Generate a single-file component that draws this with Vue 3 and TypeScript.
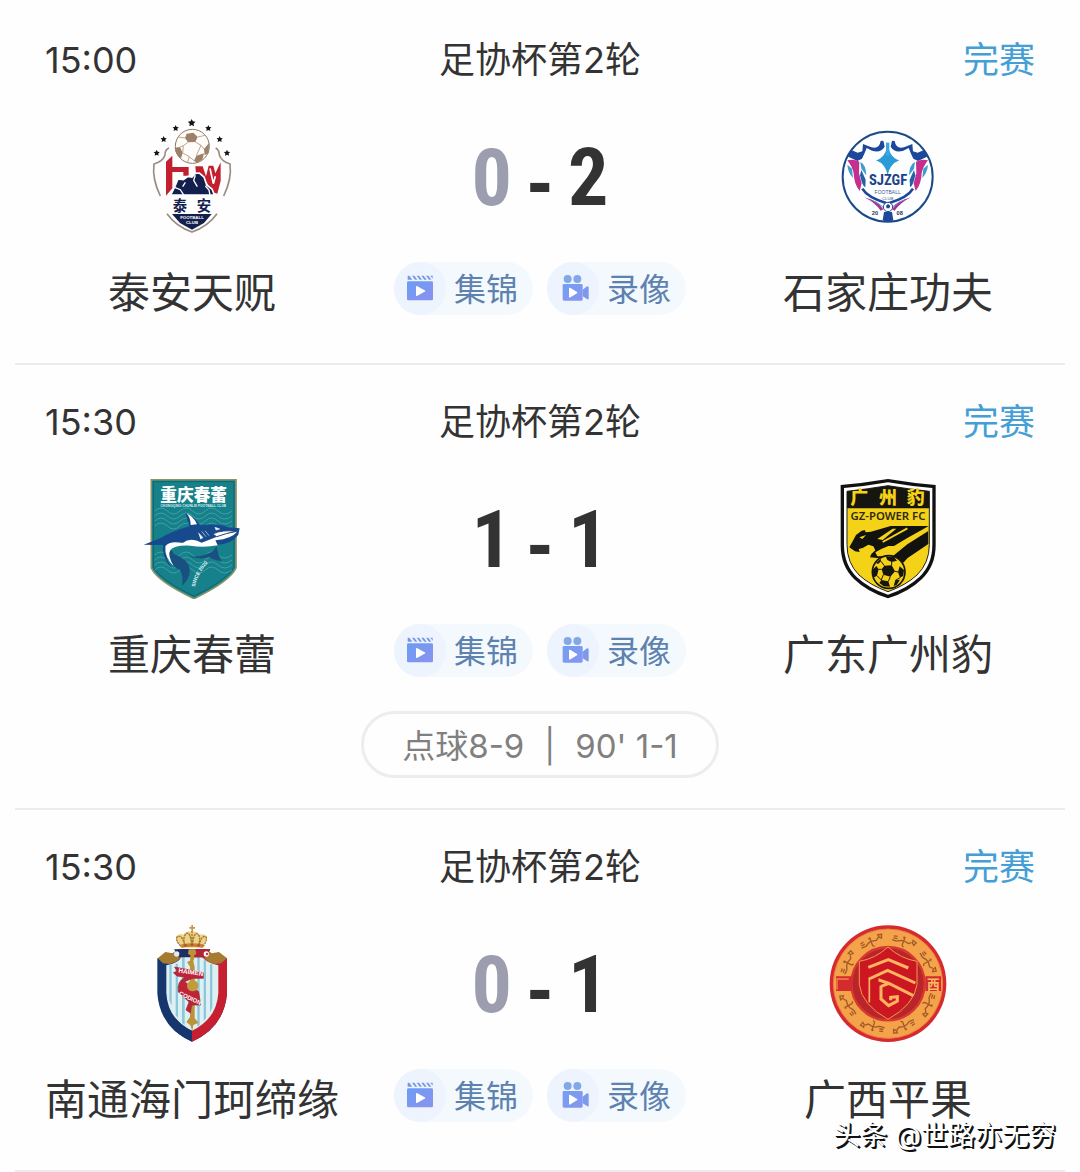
<script setup lang="ts">
interface Side {
  name: string
  crest: string
  score: number
}

interface Match {
  id: number
  time: string
  round: string
  status: string
  home: Side
  away: Side
  note?: string[]
}

const matches: Match[] = [
  {
    id: 1,
    time: '15:00',
    round: '足协杯第2轮',
    status: '完赛',
    home: { name: '泰安天贶', crest: 'taian', score: 0 },
    away: { name: '石家庄功夫', crest: 'sjz', score: 2 },
  },
  {
    id: 2,
    time: '15:30',
    round: '足协杯第2轮',
    status: '完赛',
    home: { name: '重庆春蕾', crest: 'chongqing', score: 1 },
    away: { name: '广东广州豹', crest: 'gzpower', score: 1 },
    note: ['点球8-9', '|', "90' 1-1"],
  },
  {
    id: 3,
    time: '15:30',
    round: '足协杯第2轮',
    status: '完赛',
    home: { name: '南通海门珂缔缘', crest: 'haimen', score: 0 },
    away: { name: '广西平果', crest: 'guangxi', score: 1 },
  },
]

const sides = (m: Match) => [
  { key: 'home', side: m.home },
  { key: 'away', side: m.away },
]

const starCentres = [
  [80, 144, 10],
  [101, 103, 10],
  [137, 70, 10],
  [185, 54, 12],
  [235, 70, 10],
  [269, 103, 10],
  [291, 144, 10],
]

// Outline of a five-pointed star around a centre
function star(cx: number, cy: number, r: number): string {
  return Array.from({ length: 10 }, (_, i) => {
    const radius = i % 2 ? r * 0.5 : r
    const a = (Math.PI / 5) * i - Math.PI / 2
    return `${(cx + radius * Math.cos(a)).toFixed(1)},${(cy + radius * Math.sin(a)).toFixed(1)}`
  }).join(' ')
}

// Small figures spread round the ring of the Guangxi crest
const figureAngles = [-62, -21, 21, 62, 118, 160, 200, 242]
</script>

<template>
  <main class="page">
    <section v-for="m in matches" :key="m.id" class="match">
      <header class="head">
        <time class="time">{{ m.time }}</time>
        <span class="round">{{ m.round }}</span>
        <span class="status">{{ m.status }}</span>
      </header>

      <div class="body">
        <div v-for="s in sides(m)" :key="s.key" class="team" :class="s.key">
          <svg v-if="s.side.crest === 'taian'" class="crest" viewBox="6 36 360 360" aria-hidden="true">
            <polygon v-for="c in starCentres" :key="c[0]" :points="star(c[0], c[1], c[2])" fill="#151515" />
            <g fill="none" stroke="#9a8d82" stroke-width="5">
              <path d="M117 129Q104 135 105 150Q98 170 72 177Q66 222 91 273" />
              <path d="M257 129Q268 135 268 150Q275 170 300 177Q306 222 281 273" />
              <path d="M111 326Q138 364 186 381Q234 364 261 326" />
            </g>
            <path d="M108 170L127 152V186H176V212H160V201H127V250L108 272Z" fill="#c2202f" />
            <path d="M196 184H218L228 214L236 182H250L256 205L272 172V228L262 266L248 262L226 226L210 206H198Z" fill="#c2202f" />
            <path d="M240 190L250 236L256 214" fill="none" stroke="#fff" stroke-width="5" />
            <path d="M122 270L134 246L144 222L160 224L174 214L186 216L196 205L208 204L222 216L230 240L246 252L253 270Z" fill="#13204d" stroke="#fff" stroke-width="5" />
            <path d="M134 247L151 254L162 271M196 211L191 226L202 245M226 243L237 255L240 270M166 232L158 245" fill="none" stroke="#fff" stroke-width="4" />
            <text x="150" y="317" text-anchor="middle" font-size="43" font-weight="700" fill="#13204d" class="cjk">泰</text>
            <text x="222" y="317" text-anchor="middle" font-size="43" font-weight="700" fill="#13204d" class="cjk">安</text>
            <path d="M126 327H245L222 354L186 374L150 354Z" fill="#13204d" />
            <text x="186" y="343" text-anchor="middle" font-size="13" font-weight="700" fill="#fff" class="latin">FOOTBALL</text>
            <text x="186" y="358" text-anchor="middle" font-size="13" font-weight="700" fill="#fff" class="latin">CLUB</text>
            <circle cx="187" cy="124" r="51" fill="#fffdf8" stroke="#8d7a68" stroke-width="3" />
            <path d="M170 86L190 83L203 96L196 111L174 112L165 99ZM237 114L236 144L224 151L222 132ZM134 128L150 126L158 144L153 160Q136 150 134 128ZM199 152L222 145L217 164L200 173L192 167Z" fill="#9c8069" />
            <path d="M174 112L160 122L150 126M196 111L213 121L222 132M158 144L178 155L192 167M203 96L226 91M165 99L145 96M213 121L199 152M178 155L172 173M160 122L158 144" fill="none" stroke="#b9a796" stroke-width="3" />
          </svg>

          <svg v-else-if="s.side.crest === 'sjz'" class="crest" viewBox="24 21 360 360" aria-hidden="true">
            <circle cx="203" cy="200" r="135" fill="#fdfeff" stroke="#1d4a86" stroke-width="6" />
            <g v-for="side in [1, -1]" :key="side" :transform="side === 1 ? undefined : 'translate(406 0) scale(-1 1)'">
              <path d="M182 93L190 92L194 110Q182 130 156 122L140 114L133 131L126 146L112 153L82 139L94 120L113 128L127 124L129 102L152 111Q178 119 182 93Z" fill="#1c479b" />
              <path d="M82 151Q102 146 118 155L117 190L125 220L119 243Q102 223 101 190Q97 170 82 151Z" fill="#c72f8f" />
              <path d="M82 164L96 176L99 204Q84 188 82 164ZM121 156Q138 164 139 196L124 176Z" fill="#3f9dce" />
              <path d="M124 180L137 209L136 232Q127 229 120 196Z" fill="#2460aa" />
              <path d="M127 236Q142 262 198 279L203 288" fill="none" stroke="#1c479b" stroke-width="8" />
              <path d="M133 262Q172 271 190 298L182 302Q164 277 133 262Z" fill="#a53591" />
              <path d="M150 269Q180 279 197 300" fill="none" stroke="#6384c6" stroke-width="3" />
            </g>
            <path d="M203 96Q206 142 238 151Q209 162 203 196Q197 162 168 151Q200 142 203 96Z" fill="#2b9bd7" />
            <path d="M198 98H208V137H198Z" fill="#3aa8dd" />
            <text x="204" y="224" text-anchor="middle" font-size="44" font-weight="700" fill="#1c4387" class="narrow">SJZGF</text>
            <text x="203" y="253" text-anchor="middle" font-size="15" fill="#415d91" class="latin">FOOTBALL</text>
            <text x="203" y="269" text-anchor="middle" font-size="13" fill="#415d91" class="latin">CLUB</text>
            <circle cx="204" cy="291" r="14" fill="#fff" stroke="#1c479b" stroke-width="3" />
            <path d="M198 287L204 282L211 287L208 295H200ZM192 306H216L220 331Q203 338 188 331Z" fill="#1c479b" />
            <text x="165" y="316" text-anchor="middle" font-size="17" font-weight="700" fill="#25365b" class="latin">20</text>
            <text x="239" y="316" text-anchor="middle" font-size="17" font-weight="700" fill="#25365b" class="latin">08</text>
          </svg>

          <svg v-else-if="s.side.crest === 'chongqing'" class="crest" viewBox="6 42 360 360" aria-hidden="true">
            <path d="M64 44H318V309Q300 349 192 401Q82 349 64 309Z" fill="#16808b" stroke="#8b9465" stroke-width="5" />
            <path d="M70 50H312V307Q292 344 192 394Q90 344 70 307Z" fill="none" stroke="#0e6572" stroke-width="3" />
            <g fill="none" stroke="#3fa1a5" stroke-width="3">
              <path v-for="y in [138, 153, 168, 183, 270, 285, 300, 315]" :key="y" :d="`M74 ${y}Q93 ${y - 18} 112 ${y}T150 ${y}T188 ${y}T226 ${y}T264 ${y}T306 ${y}`" />
            </g>
            <text x="191" y="107" text-anchor="middle" font-size="50" font-weight="900" fill="#fff" class="cjk">重庆春蕾</text>
            <text x="190" y="125" text-anchor="middle" font-size="10" font-weight="700" fill="#d5ecec" class="latin">CHONGQING CHUNLEI FOOTBALL CLUB</text>
            <path d="M105 240Q108 300 150 314Q162 335 156 363Q190 329 174 296Q160 278 132 268L119 246Z" fill="#195081" />
            <path d="M171 273Q210 281 250 258L259 244Q263 268 275 290Q248 284 236 276Q210 286 171 273Z" fill="#195081" />
            <path d="M41 239L92 219Q128 198 178 184Q170 155 166 144Q192 154 211 181Q269 174 293 187L329 190L325 209Q307 236 259 240Q202 249 174 231Q119 231 107 249Q103 276 126 309L116 299Q95 268 99 239L78 240Z" fill="#17498d" />
            <path d="M170 145Q193 158 201 178L182 180Q182 160 170 145ZM106 244Q119 226 158 234Q182 215 215 233Q254 219 278 208L321 200Q307 220 256 226L263 241Q222 249 181 242Q131 240 121 256Q111 269 131 304Q103 276 106 244Z" fill="#fff" />
            <path d="M248 207Q277 193 318 199Q291 204 260 215Z" fill="#fff" stroke="#244a7c" stroke-width="3" />
            <path d="M255 187L269 192L258 195ZM205 203L219 218L211 222M215 199L228 215M225 197L237 212" fill="#fff" stroke="#dce7ee" stroke-width="2" />
            <path id="sinceArc" d="M195 366Q203 319 245 284" fill="none" />
            <text font-size="15" font-weight="700" fill="#e6f5f3" class="latin"><textPath href="#sinceArc">SINCE 2020</textPath></text>
          </svg>

          <svg v-else-if="s.side.crest === 'gzpower'" class="crest" viewBox="24 42 360 360" aria-hidden="true">
            <path d="M62 60Q132 54 204 42Q276 54 347 60V241Q347 303 306 342Q266 381 204 400Q142 381 102 342Q62 303 62 241Z" fill="#111" />
            <path d="M72 69Q136 64 204 52Q272 64 337 69V239Q337 298 298 336Q261 371 204 389Q147 371 110 336Q72 298 72 239Z" fill="#fff" />
            <path d="M81 79Q143 72 204 62Q265 72 328 79V239Q328 294 291 330Q257 361 204 380Q151 361 117 330Q81 294 81 239Z" fill="#f4d218" stroke="#222" stroke-width="3" />
            <path d="M81 79Q143 72 204 62Q265 72 328 79V130H81Z" fill="#171510" />
            <text x="118" y="118" text-anchor="middle" font-size="54" font-weight="900" fill="#f4d218" class="cjk">广</text>
            <text x="204" y="118" text-anchor="middle" font-size="54" font-weight="900" fill="#f4d218" class="cjk">州</text>
            <text x="287" y="118" text-anchor="middle" font-size="54" font-weight="900" fill="#f4d218" class="cjk">豹</text>
            <text x="204" y="166" text-anchor="middle" font-size="34" font-weight="600" fill="#302a10" class="sans">GZ-POWER FC</text>
            <path d="M88 247L98 229L108 210L124 198L134 195L137 202L153 200L212 183H325V237L263 279L250 293L222 274L172 279L150 277L154 267L166 256L160 244L145 239L128 249L116 252L119 261L105 259Z" fill="#12120f" />
            <path d="M118 217L138 210L127 222ZM172 222L218 191H229L188 225ZM166 262L184 252L205 243H222L262 219L325 184V198L262 238L218 274H172Z" fill="#f4d218" />
            <path d="M188 231L262 190" fill="none" stroke="#f4d218" stroke-width="6" />
            <circle cx="206" cy="321" r="49" fill="#f4d218" stroke="#171510" stroke-width="5" />
            <path d="M193 302L215 301L225 319L211 335L190 329L185 313ZM197 274L222 276L231 287L215 291L202 285ZM158 314L169 303L176 313L171 332L160 338ZM239 304L252 315L250 332L240 338L234 321ZM184 345L205 349L210 365L191 364L178 354ZM226 346L240 344L230 360L221 363ZM168 294L182 281L183 289L174 297Z" fill="#171510" />
            <path d="M215 301V291M225 319L234 321M211 335L205 349M190 329L184 345M185 313L176 313M193 302L183 289M240 338L226 346M171 332L184 345" stroke="#171510" stroke-width="3" />
          </svg>

          <svg v-else-if="s.side.crest === 'haimen'" class="crest" viewBox="6 27 360 360" aria-hidden="true">
            <path d="M82 130Q127 123 144 102H225Q243 123 291 130V235Q283 337 186 380Q89 337 82 235Z" fill="#17366e" />
            <path d="M186 102H225Q243 123 291 130V235Q283 337 186 380Z" fill="#c71f32" />
            <path d="M109 151Q145 145 154 126H216Q232 145 265 151V234Q260 312 186 347Q113 312 109 234Z" fill="#dff0f4" />
            <g fill="#8bc8da">
              <path d="M118 150H125V272L118 256ZM137 146H144V309L137 301ZM156 126H164V330L156 324ZM202 126H209V330L202 335ZM221 136H228V309L221 318ZM240 148H247V278L240 292Z" />
            </g>
            <path d="M138 311Q157 335 186 347V380Q143 361 119 331Z" fill="#17366e" />
            <path d="M144 102L160 104L158 122L139 140L119 147L99 145L83 130L106 111L128 115ZM229 102L213 104L215 122L234 140L253 147L273 145L291 130L267 111L245 115Z" fill="#a67a31" />
            <path d="M132 103H241L226 127H147Z" fill="#202f60" />
            <path d="M186 103H241L226 127H186Z" fill="#b62235" />
            <circle cx="140" cy="117" r="8" fill="#d9edf6" /><circle cx="229" cy="117" r="8" fill="#fff" /><circle cx="231" cy="117" r="4" fill="#d63b47" />
            <path d="M176 103H196L199 116L187 126L174 116ZM181 124L187 116L194 127L190 139L194 155V310L206 323L190 330L187 348L181 331L169 321L180 306V155L171 141L180 137Z" fill="#bc933a" />
            <path d="M134 156L220 173V190H188L164 200L206 230L212 270L185 270L181 294L168 285L177 261L145 231Q140 200 165 187L141 183L130 173L141 169Z" fill="#bf2338" stroke="#8f2b35" stroke-width="2" />
            <circle cx="188" cy="212" r="17" fill="#c59a3c" />
            <text x="182" y="178" text-anchor="middle" font-size="19" font-weight="700" fill="#fff" class="latin" transform="rotate(8 182 178)">HAIMEN</text>
            <text x="178" y="255" text-anchor="middle" font-size="18" font-weight="700" fill="#fff" class="latin" transform="rotate(26 178 255)">CODION</text>
            <path d="M153 98L137 69Q139 59 153 57L160 59Q168 49 184 49Q201 49 208 59Q226 55 230 66L218 98Z" fill="#ecd28a" />
            <path d="M153 94Q136 78 141 66Q157 57 164 91M164 91Q157 65 170 55Q181 50 185 90M187 90Q192 49 203 57Q214 65 205 91M207 91Q216 56 229 67Q231 81 218 95M186 48V88" fill="none" stroke="#a7782d" stroke-width="4" stroke-dasharray="7 2" />
            <path d="M154 88Q186 82 219 88V98Q186 93 154 98Z" fill="#bd8530" />
            <path d="M184 30H189V36H195V41H189V48H184V41H178V36H184Z" fill="#c89a3b" />
            <g fill="#c14835"><circle cx="166" cy="91" r="4" /><circle cx="186" cy="90" r="4" /><circle cx="206" cy="91" r="4" /></g>
          </svg>

          <svg v-else class="crest" viewBox="24 27 360 360" aria-hidden="true">
            <circle cx="204" cy="206" r="175" fill="#d52b2e" />
            <circle cx="204" cy="206" r="164" fill="#f4a34a" stroke="#ed7b42" stroke-width="3" />
            <circle cx="204" cy="206" r="110" fill="#b9252b" stroke="#d53a2e" stroke-width="7" />
            <g v-for="a in figureAngles" :key="a" :transform="`rotate(${a} 204 206) translate(204 70)`">
              <path d="M-36 8H-22M-34 2L-22 0M-35 -4L-24 -7M-22 8L-10 1L0 -1L14 2L22 -4M-2 -13V14M-2 -13L-7 -9M-2 14L4 17M24 -12L35 -9L31 1L25 -4Z" fill="none" stroke="#a35a28" stroke-width="4" />
            </g>
            <path d="M48 184H95V228H48ZM316 184H363V228H316Z" fill="#d52b2e" />
            <path d="M86 192H51V224" fill="none" stroke="#f08a4a" stroke-width="4" />
            <text x="340" y="221" text-anchor="middle" font-size="38" font-weight="700" fill="#f8bd63" class="cjk">西</text>
            <path d="M118 139Q166 131 204 96Q242 131 291 139V209Q283 269 204 313Q125 269 118 209Z" fill="#cc1722" stroke="#ef9a50" stroke-width="3" />
            <path d="M145 157L205 134L265 159M147 192L203 166L286 204M180 200V196L207 205L280 242M183 214L207 205M183 212V252L206 272L232 258V245L212 247V256" fill="none" stroke="#ffb560" stroke-width="9" />
            <path d="M148 188V262" stroke="#ffb560" stroke-width="5" />
          </svg>
          <h2 class="name">{{ s.side.name }}</h2>
        </div>

        <div class="centre">
          <div class="score">
            <span class="goals left" :class="{ lost: m.home.score < m.away.score }">{{ m.home.score }}</span>
            <span class="dash">-</span>
            <span class="goals">{{ m.away.score }}</span>
          </div>
          <div class="actions">
            <button type="button" class="action">
              <span class="disc">
                <svg viewBox="-9 -6 96 96" class="glyph" aria-hidden="true">
                  <defs>
                    <linearGradient :id="`clap${m.id}`" x1="0" y1="0" x2="1" y2="1">
                      <stop offset="0" stop-color="#6c9cf3" />
                      <stop offset="1" stop-color="#8a92f0" />
                    </linearGradient>
                  </defs>
                  <rect x="0" y="19" width="78" height="57" rx="4" :fill="`url(#clap${m.id})`" />
                  <path d="M2 2H7L16 14H2ZM15 2H22L31 14H24ZM29 2H36L45 14H38ZM43 2H50L59 14H52ZM57 2H64L73 14H66ZM70 2H77V11Z" fill="#7598e6" />
                  <path d="M29 35L53 48L29 61Z" fill="#fff" stroke="#fff" stroke-width="4" stroke-linejoin="round" />
                </svg>
              </span>
              <span class="label">集锦</span>
            </button>
            <button type="button" class="action">
              <span class="disc">
                <svg viewBox="-16 -6 96 96" class="glyph" aria-hidden="true">
                  <defs>
                    <linearGradient :id="`cam${m.id}`" x1="0" y1="0" x2="1" y2="1">
                      <stop offset="0" stop-color="#749ff2" />
                      <stop offset="1" stop-color="#8795f0" />
                    </linearGradient>
                  </defs>
                  <circle cx="16" cy="12" r="12" fill="#82a8e8" />
                  <circle cx="45" cy="12" r="12" fill="#82a8e8" />
                  <rect x="1" y="27" width="60" height="50" rx="4" :fill="`url(#cam${m.id})`" />
                  <path d="M61 44L74 34Q79 32 79 38V70Q79 76 74 72L61 64Z" fill="#7e98ea" />
                  <path d="M22 40L43 53L22 66Z" fill="#fff" stroke="#fff" stroke-width="4" stroke-linejoin="round" />
                </svg>
              </span>
              <span class="label">录像</span>
            </button>
          </div>
        </div>
      </div>

      <p v-if="m.note" class="note">
        <span v-for="part in m.note" :key="part">{{ part }}</span>
      </p>
    </section>
    <div class="mark">头条 @世路亦无穷</div>
  </main>
</template>

<style>
body {
  margin: 0;
  background: #fefefe;
}
</style>

<style scoped>
.page {
  position: relative;
  padding: 3px 15px 0;
  color: #333;
  font-family: Inter, "Noto Sans CJK SC", sans-serif;
}

.match {
  padding: 35px 3px 30px;
  border-bottom: 2px solid #ececee;
}

.head {
  display: grid;
  grid-template-columns: 1fr auto 1fr;
  padding: 0 27px;
  font-size: 36px;
  line-height: 44px;
}

.status {
  text-align: right;
  color: #459fd6;
}

.body {
  display: grid;
  grid-template-columns: repeat(3, minmax(0, 1fr));
  padding: 35px 0 12px;
}

.team {
  display: flex;
  flex-direction: column;
  align-items: center;
  grid-row: 1;
}

.home {
  grid-column: 1;
}

.away {
  grid-column: 3;
}

.crest {
  width: 120px;
  height: 120px;
}

.name {
  margin: 28px 0 0;
  font-size: 42px;
  font-weight: 400;
  line-height: 56px;
  white-space: nowrap;
}

.centre {
  grid-column: 2;
  grid-row: 1;
  display: flex;
  flex-direction: column;
  align-items: center;
}

.score {
  display: grid;
  grid-template-columns: 1fr 56px 1fr;
  width: 100%;
  font-family: "Roboto Condensed", "Liberation Sans Narrow", Roboto, sans-serif;
  font-size: 80px;
  font-weight: 700;
  line-height: 122px;
}

.goals.left {
  text-align: right;
}

.lost {
  color: #9c9eb0;
}

.dash {
  padding-top: 14px;
  line-height: 108px;
  text-align: center;
}

.actions {
  display: flex;
  gap: 14px;
  margin-top: 23px;
}

.action {
  display: flex;
  align-items: center;
  gap: 8px;
  padding: 0 15px 0 0;
  border: 0;
  border-radius: 27px;
  background: #f4f9fe;
  color: #5d82b0;
  font-family: inherit;
  font-size: 32px;
  white-space: nowrap;
}

.label {
  padding-top: 3px;
  line-height: 50px;
}

.disc {
  display: flex;
  align-items: center;
  justify-content: center;
  width: 52px;
  height: 53px;
  border-radius: 50%;
  background: #eef4fd;
}

.glyph {
  width: 32px;
  height: 32px;
}

.note {
  display: flex;
  gap: 20px;
  width: fit-content;
  margin: 16px auto 0;
  padding: 4px 38px 0;
  border: 3px solid #ededed;
  border-radius: 34px;
  color: #808080;
  font-size: 33px;
  line-height: 57px;
}

.mark {
  position: absolute;
  right: 24px;
  bottom: 18px;
  color: #fff;
  font-size: 27px;
  line-height: 36px;
  text-shadow: 1px 1px 0 #111, 2px 2px 0 #111;
}

.cjk {
  font-family: "Noto Sans CJK SC", sans-serif;
}

.latin {
  font-family: "Liberation Sans", sans-serif;
}

.narrow {
  font-family: "Roboto Condensed", "Liberation Sans Narrow", Roboto, sans-serif;
}

.sans {
  font-family: "Noto Sans", sans-serif;
}
</style>
